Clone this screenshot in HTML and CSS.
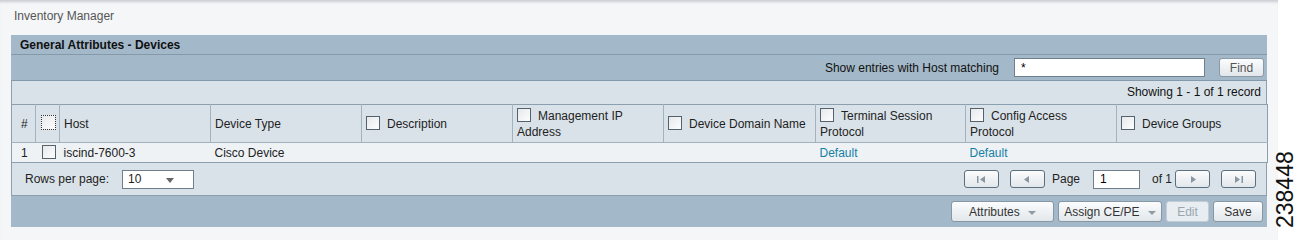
FILE: index.html
```html
<!DOCTYPE html>
<html lang="en">
  <head>
    <meta charset="UTF-8" />
    <title>Inventory Manager</title>
    <link rel="stylesheet" href="styles.css">
  </head>
  <body>
    <div class="page">
      <div class="crumb">Inventory Manager</div>
      <div class="panel">
        <div class="panel-title">General Attributes - Devices</div>
        <div class="search-row">
          <span>Show entries with Host matching</span>
          <input class="search-input" type="text" value="*">
          <button class="btn find-btn">Find</button>
        </div>
        <div class="count-row">Showing 1 - 1 of 1 record</div>
        <table class="grid">
          <colgroup>
            <col style="width:24px"><col style="width:24px">
            <col style="width:151px"><col style="width:151px"><col style="width:151px"><col style="width:151px">
            <col style="width:152px"><col style="width:150px"><col style="width:151px"><col style="width:151px">
          </colgroup>
          <thead>
            <tr>
              <th class="num">#</th>
              <th class="cbcell"><span class="cb dotted"></span></th>
              <th>Host</th>
              <th>Device Type</th>
              <th><span class="cb"></span>Description</th>
              <th><span class="cb"></span>Management IP Address</th>
              <th><span class="cb"></span>Device Domain Name</th>
              <th><span class="cb"></span>Terminal Session Protocol</th>
              <th><span class="cb"></span>Config Access Protocol</th>
              <th><span class="cb"></span>Device Groups</th>
            </tr>
          </thead>
          <tbody>
            <tr>
              <td class="num">1</td>
              <td class="cbcell"><span class="cb"></span></td>
              <td>iscind-7600-3</td>
              <td>Cisco Device</td>
              <td></td>
              <td></td>
              <td></td>
              <td><a class="link">Default</a></td>
              <td><a class="link">Default</a></td>
              <td></td>
            </tr>
          </tbody>
        </table>
        <div class="pager-row">
          <div class="rows">
            <span>Rows per page:</span>
            <div class="select">10<span class="caret"></span></div>
          </div>
          <div class="pager">
            <button class="btn nav"><svg width="12" height="9" viewBox="0 0 12 9"><rect x="2" y="1" width="1.5" height="7" fill="#8a96a0"/><path d="M10 1 L5 4.5 L10 8 Z" fill="#8a96a0"/></svg></button>
            <button class="btn nav"><svg width="12" height="9" viewBox="0 0 12 9"><path d="M8 1 L3 4.5 L8 8 Z" fill="#8a96a0"/></svg></button>
            <span class="page-label">Page</span>
            <input class="page-input" type="text" value="1">
            <span class="of">of 1</span>
            <button class="btn nav"><svg width="12" height="9" viewBox="0 0 12 9"><path d="M4 1 L9 4.5 L4 8 Z" fill="#8a96a0"/></svg></button>
            <button class="btn nav last"><svg width="12" height="9" viewBox="0 0 12 9"><path d="M2 1 L7 4.5 L2 8 Z" fill="#8a96a0"/><rect x="8.5" y="1" width="1.5" height="7" fill="#8a96a0"/></svg></button>
          </div>
        </div>
        <div class="action-bar">
          <button class="btn act w-attr">Attributes <span class="dd"></span></button>
          <button class="btn act w-assign">Assign CE/PE <span class="dd"></span></button>
          <button class="btn act w-edit disabled">Edit</button>
          <button class="btn act w-save">Save</button>
        </div>
      </div>
    </div>
    <div class="fig-id">238448</div>
  </body>
</html>
```

FILE: styles.css
```css
body {
  margin: 0;
  background: #ffffff;
  font-family: "Liberation Sans", Arial, sans-serif;
  font-size: 12px;
  color: #222;
  position: relative;
  height: 240px;
  overflow: hidden;
}
.page {
  width: 1278px;
  height: 240px;
  background: #f4f6f8;
  box-shadow: inset 0 4px 3px -2px #c9cdd1;
}
.crumb {
  padding: 9px 0 0 14px;
  height: 35px;
  box-sizing: border-box;
  color: #555;
  font-size: 12px;
}
.panel {
  margin-left: 11px;
  width: 1256px;
}
.panel-title {
  background: #a3b8c8;
  height: 19px;
  line-height: 20px;
  padding-left: 9px;
  font-weight: bold;
  color: #111;
  border-bottom: 1px solid #8499a9;
}
.search-row {
  background: #a3b8c8;
  height: 25px;
  display: flex;
  align-items: center;
  justify-content: flex-end;
  border-bottom: 1px solid #8499a9;
  padding-right: 3px;
}
.search-row span { margin-right: 15px; color: #111; }
.search-input {
  width: 191px;
  height: 19px;
  box-sizing: border-box;
  border: 1px solid #6f7f8c;
  font-family: inherit;
  font-size: 12px;
  padding: 0 0 0 6px;
  margin-right: 14px;
}
.btn {
  font-family: inherit;
  font-size: 12px;
  color: #333;
  border: 1px solid #8d9aa5;
  border-radius: 3px;
  background: linear-gradient(#fbfcfd, #e2e7eb);
  padding: 0;
  height: 19px;
  line-height: 16px;
}
.find-btn { width: 45px; color: #555; }
.count-row {
  background: #dae2e9;
  height: 23px;
  line-height: 23px;
  text-align: right;
  padding-right: 5px;
  border-left: 1px solid #8c9faf;
  border-right: 1px solid #8c9faf;
  color: #111;
}
.grid {
  width: 1256px;
  border-collapse: collapse;
  table-layout: fixed;
}
.grid th {
  background: #dae2e9;
  font-weight: normal;
  text-align: left;
  vertical-align: middle;
  height: 37px;
  line-height: 16px;
  padding: 0 4px;
  border: 1px solid #a2b2bf;
  border-top: 1px solid #8c9faf;
  color: #222;
}
.grid td {
  background: #eef2f5;
  height: 19px;
  padding: 0 4px;
  border-bottom: 1px solid #8c9faf;
}
.grid th:first-child, .grid td:first-child { border-left: 1px solid #8c9faf; }
.grid th:last-child, .grid td:last-child { border-right: 1px solid #8c9faf; }
.grid .num { padding-left: 9px; }
.grid .cbcell { padding-left: 5px; }
.grid td.cbcell { padding-left: 6px; }
.cb {
  display: inline-block;
  width: 12px;
  height: 12px;
  border: 1px solid #55616b;
  background: linear-gradient(135deg, #e6e9ec, #fdfdfd);
  vertical-align: -2px;
  margin-right: 7px;
}
.cb.dotted {
  border: 1px dotted #333;
  width: 13px;
  height: 13px;
}
.link { color: #1680a4; }
.pager-row {
  background: #dae2e9;
  height: 32px;
  display: flex;
  align-items: center;
  justify-content: space-between;
  border-left: 1px solid #8c9faf;
  border-right: 1px solid #8c9faf;
  border-bottom: 1px solid #8c9faf;
}
.rows { display: flex; align-items: center; padding-left: 13px; }
.rows span { margin-right: 13px; }
.select {
  width: 72px;
  height: 19px;
  box-sizing: border-box;
  border: 1px solid #6f7f8c;
  background: #fff;
  padding-left: 5px;
  line-height: 17px;
  position: relative;
}
.caret {
  position: absolute;
  right: 6px;
  top: 7px;
  border-left: 4px solid transparent;
  border-right: 4px solid transparent;
  border-top: 5px solid #666;
}
.pager { display: flex; align-items: center; padding-right: 10px; }
.nav {
  width: 35px;
  height: 18px;
  border-color: #5c6f7e;
  display: flex;
  align-items: center;
  justify-content: center;
  margin-left: 11px;
}
.pager .nav:first-child { margin-left: 0; }
.page-label { margin-left: 7px; }
.page-input {
  width: 47px;
  height: 19px;
  box-sizing: border-box;
  border: 1px solid #6f7f8c;
  font-family: inherit;
  font-size: 12px;
  padding: 0 0 0 6px;
  margin-left: 13px;
}
.of { margin-left: 12px; }
.pager .of + .nav { margin-left: 3px; }
.action-bar {
  background: #a3b8c8;
  height: 31px;
  display: flex;
  align-items: center;
  justify-content: flex-end;
  padding-right: 4px;
  gap: 4px;
}
.act { height: 21px; color: #333; border-color: #8797a3; }
.w-attr { width: 103px; }
.w-assign { width: 104px; }
.w-edit { width: 43px; }
.w-save { width: 50px; }
.disabled { color: #9aa6af; background: #e8edf1; border-color: #c2ccd4; }
.dd {
  display: inline-block;
  border-left: 4px solid transparent;
  border-right: 4px solid transparent;
  border-top: 4px solid #8e9aa4;
  vertical-align: 1px;
  margin-left: 5px;
}
.fig-id {
  position: absolute;
  left: 1270px;
  top: 150px;
  width: 80px;
  height: 30px;
  transform-origin: 0 0;
  transform: rotate(-90deg) translate(-78px, 0);
  font-family: "Liberation Sans", Arial, sans-serif;
  font-size: 23px;
  color: #111;
  line-height: 30px;
}
```
